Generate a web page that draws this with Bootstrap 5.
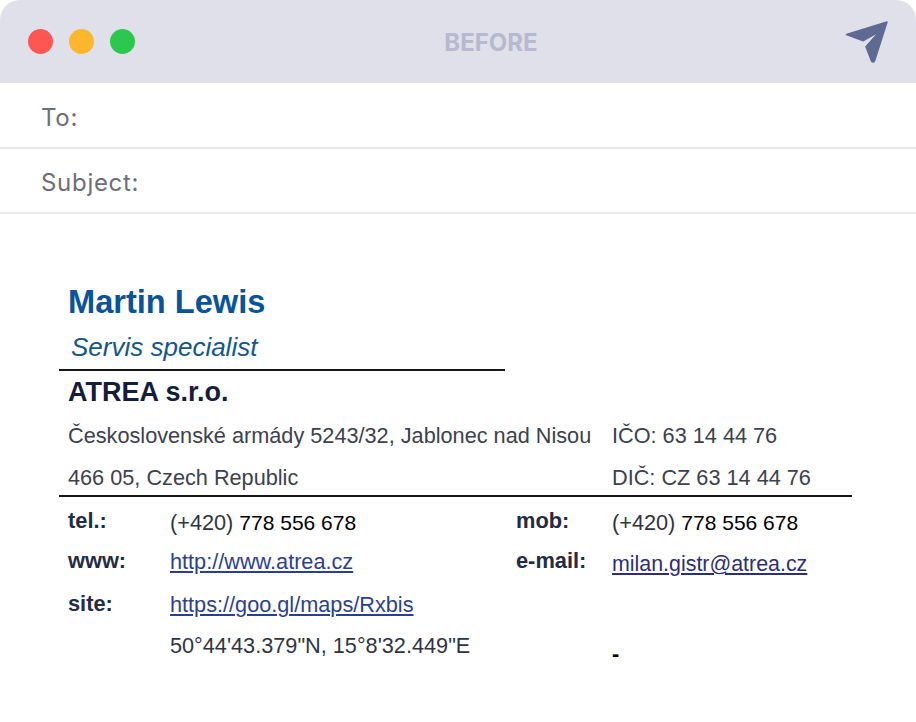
<!DOCTYPE html>
<html lang="cs">
<head>
    <meta charset="UTF-8">
    <meta name="viewport" content="width=device-width, initial-scale=1.0">
    <title>Before</title>
    <link href="https://cdn.jsdelivr.net/npm/bootstrap@5.3.0/dist/css/bootstrap.min.css" rel="stylesheet">
    <style>
        html, body { height: 100%; }
        body { background: #fff; font-family: "Liberation Sans", Arial, sans-serif; overflow: hidden; }
        .mail-window { width: 916px; height: 722px; }
        .mail-head { height: 83px; background: #dfe0ea; border-radius: 20px 20px 0 0; padding: 0 28px; margin-bottom: 1px; }
        .dot-btn { width: 25px; height: 25px; border-radius: 50%; }
        .dot-red { background: #fe5652; }
        .dot-yellow { background: #feb62c; }
        .dot-green { background: #2cc84d; }
        .dots-wrap { gap: 16px; }
        .head-title { font-family: "Inter", sans-serif; font-weight: 700; font-size: 24px; color: #b6b9d0; padding-top: 2px; padding-left: 2px; }
        .send-icon { width: 44px; height: 44px; margin-right: -1px; }
        .mail-field { height: 65px; padding: 5px 0 0 41px; border-bottom: 2px solid #e8e8ea; font-family: "Inter", sans-serif; font-size: 24px; letter-spacing: .7px; color: #6d6e78; }
        .sig-wrap { padding: 66px 0 0 59px; color: #2f3444; }
        .sig-name { font-size: 32.600px; font-weight: 700; color: #07539c; line-height: 44px; padding-left: 9px; }
        .sig-role { font-size: 26px; font-style: italic; color: #14558f; line-height: 46px; padding-left: 12px; height: 47px; width: 446px; border-bottom: 2px solid #16161a; }
        .sig-company { font-size: 27px; font-weight: 700; color: #151d3a; line-height: 42px; height: 43px; padding-left: 9px; }
        .sig-addr { font-size: 21.700px; color: #3c4150; height: 42px; padding-top: 2px; }
        .sig-addr-low { height: 39px; padding-top: 6px; }
        .sig-addr span:first-child { width: 553px; padding-left: 9px; }
        .sig-rule { width: 793px; height: 2px; background: #16161a; }
        .sig-grid { display: grid; grid-template-columns: 111px 346px 96px 1fr; grid-template-rows: 39px 43px 41px 41px; font-size: 21.700px; padding-top: 10px; }
        .sig-label { color: #232b45; font-size: 21.800px; margin-top: -1px; }
        .sig-label-top { margin-top: -2px; }
        .sig-label-first { padding-left: 9px; }
        .sig-grid a { color: #2b3f92; }
        .sig-grid a.sig-mail { color: #2b2f78; font-size: 21.400px; margin-top: 2px; }
        .sig-black { color: #000; font-size: 21px; }
        .sig-dash { color: #000; font-weight: 700; margin-top: 8px; }
    </style>
</head>
<body>
    <div class="mail-window">
        <div class="mail-head d-flex align-items-center justify-content-between">
            <div class="d-flex dots-wrap">
                <div class="dot-btn dot-red"></div>
                <div class="dot-btn dot-yellow"></div>
                <div class="dot-btn dot-green"></div>
            </div>
            <div class="head-title">BEFORE</div>
            <svg class="send-icon" viewBox="0 0 44 44">
                <path d="M1.500 14.500 42 2 29.500 41 Q28 43 26.500 41 L21 26.700 34.300 11.700 18.300 20.700 Z" fill="#5f6a92" stroke="#5f6a92" stroke-width="1.500" stroke-linejoin="round"/>
            </svg>
        </div>
        <div class="mail-field d-flex align-items-center">To:</div>
        <div class="mail-field d-flex align-items-center">Subject:</div>
        <div class="sig-wrap">
            <div class="sig-name">Martin Lewis</div>
            <div class="sig-role">Servis specialist</div>
            <div class="sig-company">ATREA s.r.o.</div>
            <div class="sig-addr d-flex align-items-center"><span>Československé armády 5243/32, Jablonec nad Nisou</span><span>IČO: 63 14 44 76</span></div>
            <div class="sig-addr sig-addr-low d-flex align-items-center"><span>466 05, Czech Republic</span><span>DIČ: CZ 63 14 44 76</span></div>
            <div class="sig-rule"></div>
            <div class="sig-grid">
                <b class="sig-label sig-label-top sig-label-first">tel.:</b><span>(+420) <span class="sig-black">778 556 678</span></span><b class="sig-label sig-label-top">mob:</b><span>(+420) <span class="sig-black">778 556 678</span></span>
                <b class="sig-label sig-label-first">www:</b><a href="#">http://www.atrea.cz</a><b class="sig-label">e-mail:</b><a class="sig-mail" href="#">milan.gistr@atrea.cz</a>
                <b class="sig-label sig-label-first">site:</b><a href="#">https://goo.gl/maps/Rxbis</a><span></span><span></span>
                <span></span><span>50°44'43.379"N, 15°8'32.449"E</span><span></span><span class="sig-dash">-</span>
            </div>
        </div>
    </div>
    <script src="https://cdn.jsdelivr.net/npm/bootstrap@5.3.0/dist/js/bootstrap.bundle.min.js"></script>
</body>
</html>
